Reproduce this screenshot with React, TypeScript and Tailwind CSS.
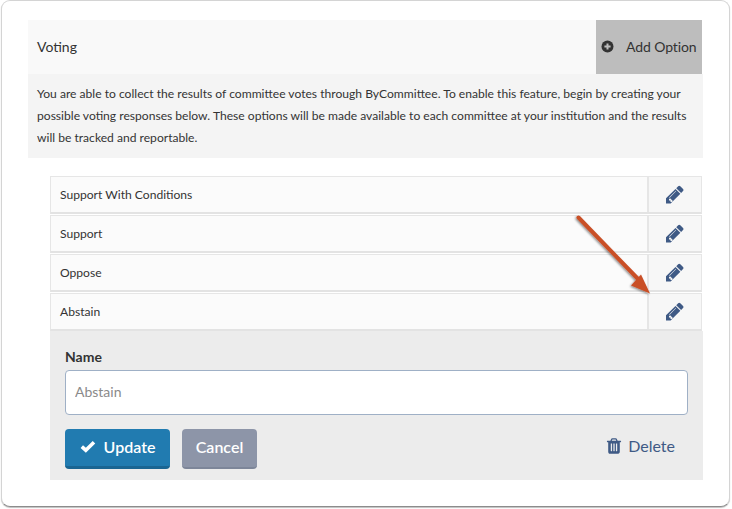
import React from "react";

const Pencil = () => (
  <svg className="ml-[3px]" width="21" height="21" viewBox="0 0 1792 1792" aria-hidden="true">
    <path fill="#3f5a85" d="M491 1536l91-91-235-235-91 91v107h128v128h107zm372-928q0-22-22-22-10 0-17 7l-542 542q-7 7-7 17 0 22 22 22 10 0 17-7l542-542q7-7 7-17zm-54-192l416 416-832 832h-416v-416zm683 96q0 53-37 90l-166 166-416-416 166-165q36-38 90-38 53 0 91 38l235 234q37 39 37 91z" />
  </svg>
);

const rows = ["Support With Conditions", "Support", "Oppose", "Abstain"];

export default function App() {
  return (
    <div className="relative h-[509px] w-[732px] bg-white font-['Lato',sans-serif]">
      <div className="ml-px h-[507px] w-[729px] rounded-[9px] border border-[#d4d4d4] border-b-[#8c8c8c] bg-white pl-[26px] pr-[26px] pt-[19px] shadow-[0_1px_1px_rgba(0,0,0,0.25)]">
        <div className="flex h-[54px] w-[674px] items-stretch bg-[#f9f9f9]">
          <div className="flex flex-1 items-center pb-[2px] pl-[9px] text-[14px] text-[#333]">Voting</div>
          <div className="flex w-[106px] items-center bg-[#bdbdbd] pb-[1px] pl-[5px] text-[14px] text-[#333]">
            <svg width="13" height="13" viewBox="0 0 13 13" aria-hidden="true">
              <circle cx="6.5" cy="6.5" r="6" fill="#333" />
              <path d="M6.5 3.4v6.2M3.4 6.5h6.2" stroke="#bdbdbd" strokeWidth="2" />
            </svg>
            <span className="ml-[12px] tracking-[-0.1px]">Add Option</span>
          </div>
        </div>
        <div className="h-[84px] w-[675px] bg-[#f4f4f4] px-[9px] pt-[9px] text-[12.1px] leading-[22px] text-[#333]">
          You are able to collect the results of committee votes through ByCommittee. To enable this feature, begin by creating your possible voting responses below. These options will be made available to each committee at your institution and the results will be tracked and reportable.
        </div>
        <div className="ml-[22px] mt-[18px] flex w-[653px] flex-col">
          <div className="flex w-[652px] flex-col gap-px">
            {rows.map((r) => (
              <div key={r} className="flex h-[38px] border-2 border-[#e3e3e3] border-t-[#e6e6e6] border-x-[#e6e6e6] bg-[#fbfbfb] [border-width:1px_1px_2px_1px]">
                <div className="flex flex-1 items-center pl-[9px] pt-[2px] text-[12.1px] text-[#333]">{r}</div>
                <div className="flex w-[54px] items-center justify-center border-l-2 border-[#e6e6e6] bg-[#f7f7f7]">
                  <Pencil />
                </div>
              </div>
            ))}
          </div>
          <div className="h-[149px] w-[653px] bg-[#ececec] px-[15px] pt-[17px]">
            <div className="text-[14px] font-bold leading-[17px] text-[#333]">Name</div>
            <input
              readOnly
              placeholder="Abstain"
              className="mt-[5px] block h-[45px] w-[623px] rounded-[4px] border border-[#9fb0c6] bg-white px-[9px] pb-[2px] text-[14px] text-[#333] placeholder:text-[#8a8a8a]"
            />
            <div className="mt-[14px] flex items-start">
              <div className="flex h-[40px] w-[105px] items-center justify-center gap-[8px] rounded-[4px] border-b-[3px] border-[#1a6592] bg-[#217bb0] pb-[2px] text-[16px] font-semibold text-white">
                <svg width="16" height="13" viewBox="0 0 16 13" aria-hidden="true">
                  <path d="M1.800 6.600l4 3.600L14 2.200" fill="none" stroke="#fff" strokeWidth="3.600" />
                </svg>
                <span>Update</span>
              </div>
              <div className="ml-[12px] flex h-[40px] w-[75px] items-center justify-center rounded-[4px] border-b-[2px] border-[#7d8699] bg-[#8d95a8] pb-[2px] text-[16px] font-semibold text-white">
                Cancel
              </div>
              <div className="ml-auto mr-[13px] mt-[5px] flex items-center gap-[5px] text-[16px] text-[#3f5a85]">
                <svg width="18" height="18" viewBox="0 0 1792 1792" aria-hidden="true">
                  <path fill="#3f5a85" d="M704 1376v-704q0-14-9-23t-23-9h-64q-14 0-23 9t-9 23v704q0 14 9 23t23 9h64q14 0 23-9t9-23zm256 0v-704q0-14-9-23t-23-9h-64q-14 0-23 9t-9 23v704q0 14 9 23t23 9h64q14 0 23-9t9-23zm256 0v-704q0-14-9-23t-23-9h-64q-14 0-23 9t-9 23v704q0 14 9 23t23 9h64q14 0 23-9t9-23zm-544-992h448l-48-117q-7-9-17-11h-317q-10 2-17 11zm928 32v64q0 14-9 23t-23 9h-96v948q0 83-47 143.500t-113 60.500h-832q-66 0-113-58.500t-47-141.500v-952h-96q-14 0-23-9t-9-23v-64q0-14 9-23t23-9h309l70-167q15-37 54-63t79-26h320q40 0 79 26t54 63l70 167h309q14 0 23 9t9 23z" />
                </svg>
                <span>Delete</span>
              </div>
            </div>
          </div>
        </div>
      </div>
      <svg className="pointer-events-none absolute left-[570px] top-[210px]" width="90" height="90" viewBox="570 210 90 90" aria-hidden="true">
        <defs>
          <filter id="s" x="-20%" y="-20%" width="140%" height="140%">
            <feDropShadow dx="-1" dy="1" stdDeviation="1" floodColor="#000" floodOpacity="0.45" />
          </filter>
        </defs>
        <g filter="url(#s)">
          <path d="M578.500 217.500L640 281" stroke="#c94f27" strokeWidth="4" strokeLinecap="round" fill="none" />
          <path d="M650 293.500L631 285.500L641 274.500Z" fill="#c94f27" />
        </g>
      </svg>
    </div>
  );
}
